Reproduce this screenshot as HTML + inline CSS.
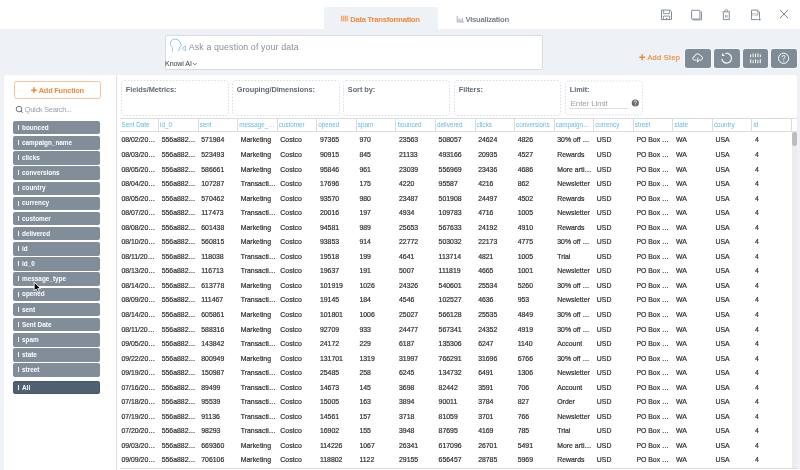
<!DOCTYPE html><html><head><meta charset="utf-8"><style>
*{box-sizing:border-box;margin:0;padding:0}
html,body{width:800px;height:470px;overflow:hidden;background:#fff;font-family:"Liberation Sans",sans-serif}
#root{position:absolute;left:0;top:0;width:800px;height:470px;will-change:transform;overflow:hidden}
.abs{position:absolute}
.t{position:absolute;white-space:nowrap;line-height:1}
.gray{position:absolute;left:0;top:29px;width:800px;height:441px;background:#eef1f5}
.tab{position:absolute;left:324px;top:7px;width:113.8px;height:22px;background:#eef1f5;border-radius:3px 3px 0 0}
.ai{position:absolute;left:165px;top:35px;width:377.5px;height:34.8px;background:#fff;border:1px solid #d9dde2;border-radius:2px}
.btn{position:absolute;top:48.7px;width:25.8px;height:19.7px;background:#7f8c98;border-radius:2.5px;box-shadow:0 0 0 1px #f6f8fa}
.btn svg{position:absolute;left:0;top:0}
.panel{position:absolute;left:4px;top:75px;width:793px;height:420px;background:#fff;border-radius:3px}
.div{position:absolute;left:116px;top:75px;width:1px;height:400px;background:#e0e0e0}
.addf{position:absolute;left:13.5px;top:81px;width:87.5px;height:17.6px;border:1px solid #f6c39a;border-radius:2.5px}
.pill{position:absolute;left:13px;width:87.4px;height:13.5px;background:#818e9a;border-radius:2px}
.pill span{position:absolute;left:9px;top:4.3px;font-size:6.4px;font-weight:bold;color:#fff;white-space:nowrap;line-height:1}
.pill i{position:absolute;left:5.1px;top:4.1px;width:1.15px;height:5.1px;background:repeating-linear-gradient(#fff 0 1.3px,rgba(255,255,255,.55) 1.3px 1.7px)}
.hc{position:absolute;top:118px;height:13.5px;width:1px;background:#dcdcdc}
.ht{position:absolute;font-size:6.3px;color:#62b9e6;white-space:nowrap;line-height:1}
.d{position:absolute;font-size:6.9px;color:#2e2e2e;white-space:nowrap;line-height:1;-webkit-text-stroke:0.2px #2e2e2e}
.ic{position:absolute}
</style></head><body><div id="root">
<div class="gray"></div>
<div class="tab"></div>

<svg class="ic" style="left:340px;top:15px" width="9" height="7"><rect x="1" y="0.8" width="7.2" height="5.6" fill="#f8d5b8"/><g fill="#f2a468"><rect x="1" y="0.8" width="1" height="5.6"/><rect x="2.9" y="0.8" width="1" height="5.6"/><rect x="4.8" y="0.8" width="1" height="5.6"/><rect x="6.7" y="0.8" width="1" height="5.6"/></g></svg>
<div class="t" style="left:350.20px;top:16.00px;font-size:7.7px;color:#ef8a3d;font-weight:bold;letter-spacing:-0.28px;">Data Transformation</div>
<svg class="ic" style="left:456px;top:15px" width="9" height="8"><path d="M1.2 0.8V7H8" fill="none" stroke="#a3a7ad" stroke-width="0.9"/><g fill="#a3a7ad"><rect x="2.6" y="3.5" width="1" height="3"/><rect x="4.2" y="4.6" width="1" height="1.9"/><rect x="5.8" y="3" width="1" height="3.5"/></g></svg>
<div class="t" style="left:465.50px;top:16.00px;font-size:7.7px;color:#7c8086;font-weight:bold;letter-spacing:-0.27px;">Visualization</div>
<svg class="ic" style="left:660px;top:9px" width="13" height="12"><path d="M1.5 1.1H10.1L11.5 2.5V10.6H1.5Z" fill="none" stroke="#75808b" stroke-width="0.9"/><path d="M3.6 1.2V4.7H9.4V1.2" fill="none" stroke="#75808b" stroke-width="0.8"/><path d="M3.4 10.5V7.1H9.6V10.5" fill="none" stroke="#75808b" stroke-width="0.8"/><rect x="5.9" y="8.9" width="1.2" height="1.5" fill="#75808b"/></svg>
<svg class="ic" style="left:690px;top:9px" width="13" height="12"><path d="M3.2 10.3V10.9H11.5V2.9H10.6" fill="none" stroke="#75808b" stroke-width="0.85"/><rect x="1.6" y="1.3" width="8.3" height="8.8" rx="0.5" fill="none" stroke="#75808b" stroke-width="0.9"/></svg>
<svg class="ic" style="left:721px;top:8px" width="11" height="13"><path d="M1.3 3.8H9.1" stroke="#75808b" stroke-width="0.9"/><path d="M3.9 3.6V2.6Q3.9 1.8 4.7 1.8H5.9Q6.7 1.8 6.7 2.6V3.6" fill="none" stroke="#75808b" stroke-width="0.8"/><path d="M2.4 4.3V11.6H8.3V4.3" fill="none" stroke="#75808b" stroke-width="0.9"/><path d="M4.6 7.1V9.6M6.1 7.1V9.6" stroke="#75808b" stroke-width="0.8"/></svg>
<svg class="ic" style="left:750px;top:9px" width="13" height="13"><path d="M7.9 10.6H1.5V1.1H7.4L9.5 3.2V8.2" fill="none" stroke="#75808b" stroke-width="0.9"/><path d="M7.4 1.1V3.2H9.5" fill="none" stroke="#75808b" stroke-width="0.6"/><text x="2.2" y="6.9" font-size="3.3" font-family="Liberation Sans" font-weight="bold" fill="#a9b0b8">PDF</text><path d="M9.6 8.4V10.4" stroke="#75808b" stroke-width="0.9"/><path d="M8.1 9.9H11.1L9.6 11.7Z" fill="#75808b"/></svg>
<svg class="ic" style="left:779px;top:9px" width="10" height="10"><path d="M1 1L9 9M9 1L1 9" stroke="#75808b" stroke-width="0.95"/></svg>
<div class="ai"></div>
<svg class="ic" style="left:166px;top:36px" width="24" height="20"><path d="M6.4 15.7V11.1C5 10 4.2 8.8 4.3 7.4C4.5 4.6 6.6 3 9 3C11.9 3 14.3 5.2 14.8 8.3L15.6 9.7L14 10.6L13.4 11.9L14 12.8L13.6 13.6L11.5 14.9" fill="none" stroke="#8fc5de" stroke-width="1"/><path d="M19.6 10L16.2 12.4L19.6 14.9Z" fill="none" stroke="#8fc5de" stroke-width="0.9"/></svg>
<div class="t" style="left:188.80px;top:43.00px;font-size:8.87px;color:#8c8f93;letter-spacing:0.1px;">Ask a question of your data</div>
<div class="t" style="left:165.00px;top:61.00px;font-size:7.1px;color:#3a3a3a;letter-spacing:-0.1px;">Knowi AI</div>
<svg class="ic" style="left:192px;top:62px" width="6" height="4"><path d="M0.8 0.9L2.8 2.9L4.8 0.9" fill="none" stroke="#555" stroke-width="0.8"/></svg>
<svg class="ic" style="left:639px;top:54px" width="7" height="7"><path d="M3.2 0.3V6.3M0.3 3.3H6.1" stroke="#ef8a3d" stroke-width="1.5"/></svg>
<div class="t" style="left:647.40px;top:54.00px;font-size:7.4px;color:#ef8a3d;letter-spacing:0.3px;-webkit-text-stroke:0.15px #ef8a3d;">Add Step</div>
<div class="btn" style="left:685.1px"><svg width="26" height="20"><path d="M11.3 11.1H9.6A1.8 1.8 0 0 1 9.7 7.5A2.9 2.9 0 0 1 15.3 6.7A2.3 2.3 0 0 1 16.1 11.1H14.2" fill="none" stroke="#fff" stroke-width="1"/><path d="M12.8 8.6V12.2" stroke="#fff" stroke-width="1"/><path d="M11.3 11.6L12.8 13.5L14.3 11.6Z" fill="#fff"/></svg></div>
<div class="btn" style="left:713.8px"><svg width="26" height="20"><path d="M7.8 9.9A4.9 4.9 0 1 0 11.3 4.5" fill="none" stroke="#fff" stroke-width="1.15"/><path d="M8 4.1L8 6.9L10.9 6.9Z" fill="#fff"/></svg></div>
<div class="btn" style="left:742.5px"><svg width="26" height="20"><g fill="#fff"><rect x="7.2" y="5.4" width="1" height="2.8"/><rect x="9.6" y="4.4" width="1" height="3.8"/><rect x="12" y="4.6" width="1" height="3.6"/><rect x="14.4" y="4.3" width="1" height="3.9"/><rect x="16.8" y="5.4" width="1" height="2.8"/><rect x="7.2" y="10.2" width="1" height="4"/><rect x="9.6" y="11.2" width="1" height="3"/><rect x="12" y="10.2" width="1" height="4"/><rect x="14.4" y="11" width="1" height="3.2"/><rect x="16.8" y="10.2" width="1" height="4"/></g></svg></div>
<div class="btn" style="left:770.9px"><svg width="26" height="20"><circle cx="12.6" cy="9.3" r="5.1" fill="none" stroke="#fff" stroke-width="1"/><path d="M11.1 8.0Q11.1 6.4 12.6 6.4Q14.1 6.4 14.1 7.8Q14.1 8.7 13.1 9.2Q12.6 9.5 12.6 10.6" fill="none" stroke="#fff" stroke-width="0.9"/><circle cx="12.6" cy="12" r="0.6" fill="#fff"/></svg></div>
<div class="panel"></div>
<div class="div"></div>
<div class="addf"></div>
<svg class="ic" style="left:31px;top:86.5px" width="7" height="7"><path d="M3 0.3V6.1M0.2 3.2H5.8" stroke="#ef8a3d" stroke-width="1.5"/></svg>
<div class="t" style="left:38.70px;top:87.00px;font-size:7.4px;color:#ef8a3d;font-weight:bold;letter-spacing:-0.2px;">Add Function</div>
<svg class="ic" style="left:15px;top:105px" width="9" height="9"><circle cx="4" cy="4.1" r="2.8" fill="none" stroke="#6a6a6a" stroke-width="0.95"/><path d="M6 6.1L7.8 7.7" stroke="#6a6a6a" stroke-width="1"/></svg>
<div class="t" style="left:24.60px;top:106.00px;font-size:7.7px;color:#98a2ad;letter-spacing:-0.39px;">Quick Search...</div>
<div class="pill" style="top:120.90px"></div>
<div class="abs" style="left:18px;top:125px;width:1.2px;height:5px;background:#f4f5f7"></div>
<div class="t" style="left:22.00px;top:125.00px;font-size:6.4px;color:#fff;font-weight:bold;">bounced</div>
<div class="pill" style="top:136.05px"></div>
<div class="abs" style="left:18px;top:140px;width:1.2px;height:5px;background:#f4f5f7"></div>
<div class="t" style="left:22.00px;top:140.00px;font-size:6.4px;color:#fff;font-weight:bold;">campaign_name</div>
<div class="pill" style="top:151.20px"></div>
<div class="abs" style="left:18px;top:155px;width:1.2px;height:5px;background:#f4f5f7"></div>
<div class="t" style="left:22.00px;top:155.00px;font-size:6.4px;color:#fff;font-weight:bold;">clicks</div>
<div class="pill" style="top:166.35px"></div>
<div class="abs" style="left:18px;top:170px;width:1.2px;height:5px;background:#f4f5f7"></div>
<div class="t" style="left:22.00px;top:170.00px;font-size:6.4px;color:#fff;font-weight:bold;">conversions</div>
<div class="pill" style="top:181.50px"></div>
<div class="abs" style="left:18px;top:186px;width:1.2px;height:5px;background:#f4f5f7"></div>
<div class="t" style="left:22.00px;top:185.00px;font-size:6.4px;color:#fff;font-weight:bold;">country</div>
<div class="pill" style="top:196.65px"></div>
<div class="abs" style="left:18px;top:201px;width:1.2px;height:5px;background:#f4f5f7"></div>
<div class="t" style="left:22.00px;top:200.00px;font-size:6.4px;color:#fff;font-weight:bold;">currency</div>
<div class="pill" style="top:211.80px"></div>
<div class="abs" style="left:18px;top:216px;width:1.2px;height:5px;background:#f4f5f7"></div>
<div class="t" style="left:22.00px;top:216.00px;font-size:6.4px;color:#fff;font-weight:bold;">customer</div>
<div class="pill" style="top:226.95px"></div>
<div class="abs" style="left:18px;top:231px;width:1.2px;height:5px;background:#f4f5f7"></div>
<div class="t" style="left:22.00px;top:231.00px;font-size:6.4px;color:#fff;font-weight:bold;">delivered</div>
<div class="pill" style="top:242.10px"></div>
<div class="abs" style="left:18px;top:246px;width:1.2px;height:5px;background:#f4f5f7"></div>
<div class="t" style="left:22.00px;top:246.00px;font-size:6.4px;color:#fff;font-weight:bold;">id</div>
<div class="pill" style="top:257.25px"></div>
<div class="abs" style="left:18px;top:261px;width:1.2px;height:5px;background:#f4f5f7"></div>
<div class="t" style="left:22.00px;top:261.00px;font-size:6.4px;color:#fff;font-weight:bold;">id_0</div>
<div class="pill" style="top:272.40px"></div>
<div class="abs" style="left:18px;top:276px;width:1.2px;height:5px;background:#f4f5f7"></div>
<div class="t" style="left:22.00px;top:276.00px;font-size:6.4px;color:#fff;font-weight:bold;">message_type</div>
<div class="pill" style="top:287.55px"></div>
<div class="abs" style="left:18px;top:292px;width:1.2px;height:5px;background:#f4f5f7"></div>
<div class="t" style="left:22.00px;top:291.00px;font-size:6.4px;color:#fff;font-weight:bold;">opened</div>
<div class="pill" style="top:302.70px"></div>
<div class="abs" style="left:18px;top:307px;width:1.2px;height:5px;background:#f4f5f7"></div>
<div class="t" style="left:22.00px;top:307.00px;font-size:6.4px;color:#fff;font-weight:bold;">sent</div>
<div class="pill" style="top:317.85px"></div>
<div class="abs" style="left:18px;top:322px;width:1.2px;height:5px;background:#f4f5f7"></div>
<div class="t" style="left:22.00px;top:322.00px;font-size:6.4px;color:#fff;font-weight:bold;">Sent Date</div>
<div class="pill" style="top:333.00px"></div>
<div class="abs" style="left:18px;top:337px;width:1.2px;height:5px;background:#f4f5f7"></div>
<div class="t" style="left:22.00px;top:337.00px;font-size:6.4px;color:#fff;font-weight:bold;">spam</div>
<div class="pill" style="top:348.15px"></div>
<div class="abs" style="left:18px;top:352px;width:1.2px;height:5px;background:#f4f5f7"></div>
<div class="t" style="left:22.00px;top:352.00px;font-size:6.4px;color:#fff;font-weight:bold;">state</div>
<div class="pill" style="top:363.30px"></div>
<div class="abs" style="left:18px;top:367px;width:1.2px;height:5px;background:#f4f5f7"></div>
<div class="t" style="left:22.00px;top:367.00px;font-size:6.4px;color:#fff;font-weight:bold;">street</div>
<div class="pill" style="top:380.8px;background:#506073;border:0.8px solid #46566b"></div>
<div class="abs" style="left:18px;top:385px;width:1.2px;height:5px;background:#f4f5f7"></div>
<div class="t" style="left:22.00px;top:385.00px;font-size:6.4px;color:#fff;font-weight:bold;">All</div>
<svg class="abs" style="left:0;top:0" width="800" height="130"><rect x="121.5" y="80.5" width="107" height="35" rx="3" fill="none" stroke="#d9dde1" stroke-width="1" stroke-dasharray="1.5 1.7"/><rect x="232.5" y="80.5" width="107" height="35" rx="3" fill="none" stroke="#d9dde1" stroke-width="1" stroke-dasharray="1.5 1.7"/><rect x="343.5" y="80.5" width="106" height="35" rx="3" fill="none" stroke="#d9dde1" stroke-width="1" stroke-dasharray="1.5 1.7"/><rect x="454.5" y="80.5" width="106" height="35" rx="3" fill="none" stroke="#d9dde1" stroke-width="1" stroke-dasharray="1.5 1.7"/><rect x="565.5" y="81" width="77" height="34" rx="3" fill="none" stroke="#d9dde1" stroke-width="1" stroke-dasharray="1.5 1.7"/></svg>
<div class="t" style="left:125.80px;top:86.00px;font-size:7.4px;color:#5f6b7a;font-weight:bold;letter-spacing:-0.08px;">Fields/Metrics:</div>
<div class="t" style="left:236.80px;top:86.00px;font-size:7.4px;color:#5f6b7a;font-weight:bold;letter-spacing:-0.08px;">Grouping/Dimensions:</div>
<div class="t" style="left:347.80px;top:86.00px;font-size:7.4px;color:#5f6b7a;font-weight:bold;letter-spacing:-0.08px;">Sort by:</div>
<div class="t" style="left:458.80px;top:86.00px;font-size:7.4px;color:#5f6b7a;font-weight:bold;letter-spacing:-0.08px;">Filters:</div>
<div class="t" style="left:569.80px;top:86.00px;font-size:7.4px;color:#5f6b7a;font-weight:bold;letter-spacing:-0.08px;">Limit:</div>
<div class="t" style="left:570.60px;top:100.00px;font-size:8.0px;color:#a2a2a2;letter-spacing:-0.11px;">Enter Limit</div>
<div class="abs" style="left:569px;top:108.4px;width:59px;height:1px;background:#dde1e6"></div>
<svg class="ic" style="left:631px;top:99px" width="9" height="9"><circle cx="4.3" cy="4" r="3.6" fill="#6a6a6a"/><path d="M3.1 3.1Q3.1 1.8 4.3 1.8Q5.5 1.8 5.5 2.9Q5.5 3.6 4.8 3.9Q4.3 4.2 4.3 5" fill="none" stroke="#e6e6e6" stroke-width="1"/><circle cx="4.3" cy="6.1" r="0.55" fill="#e6e6e6"/></svg>
<div class="abs" style="left:120px;top:118px;width:677px;height:1px;background:#dcdcdc"></div>
<div class="abs" style="left:120px;top:131px;width:677px;height:1px;background:#dcdcdc"></div>
<div class="ht" style="left:121.60px;top:122px">Sent Date</div>
<div class="hc" style="left:158px"></div>
<div class="ht" style="left:160.06px;top:122px">id_0</div>
<div class="hc" style="left:198px"></div>
<div class="ht" style="left:199.62px;top:122px">sent</div>
<div class="hc" style="left:237px"></div>
<div class="ht" style="left:239.18px;top:122px">message_…</div>
<div class="hc" style="left:277px"></div>
<div class="ht" style="left:278.74px;top:122px">customer</div>
<div class="hc" style="left:316px"></div>
<div class="ht" style="left:318.30px;top:122px">opened</div>
<div class="hc" style="left:356px"></div>
<div class="ht" style="left:357.86px;top:122px">spam</div>
<div class="hc" style="left:395px"></div>
<div class="ht" style="left:397.42px;top:122px">bounced</div>
<div class="hc" style="left:435px"></div>
<div class="ht" style="left:436.98px;top:122px">delivered</div>
<div class="hc" style="left:475px"></div>
<div class="ht" style="left:476.54px;top:122px">clicks</div>
<div class="hc" style="left:514px"></div>
<div class="ht" style="left:516.10px;top:122px">conversions</div>
<div class="hc" style="left:554px"></div>
<div class="ht" style="left:555.66px;top:122px">campaign…</div>
<div class="hc" style="left:593px"></div>
<div class="ht" style="left:595.22px;top:122px">currency</div>
<div class="hc" style="left:633px"></div>
<div class="ht" style="left:634.78px;top:122px">street</div>
<div class="hc" style="left:672px"></div>
<div class="ht" style="left:674.34px;top:122px">state</div>
<div class="hc" style="left:712px"></div>
<div class="ht" style="left:713.90px;top:122px">country</div>
<div class="hc" style="left:751px"></div>
<div class="ht" style="left:753.46px;top:122px">id</div>
<div class="hc" style="left:791px"></div>
<div class="d" style="left:121.40px;top:137px">08/02/20…</div>
<div class="d" style="left:161.66px;top:137px">556a882…</div>
<div class="d" style="left:201.22px;top:137px">571984</div>
<div class="d" style="left:240.78px;top:137px">Marketing</div>
<div class="d" style="left:280.34px;top:137px">Costco</div>
<div class="d" style="left:319.90px;top:137px">97365</div>
<div class="d" style="left:359.46px;top:137px">970</div>
<div class="d" style="left:399.02px;top:137px">23563</div>
<div class="d" style="left:438.58px;top:137px">508057</div>
<div class="d" style="left:478.14px;top:137px">24624</div>
<div class="d" style="left:517.70px;top:137px">4826</div>
<div class="d" style="left:557.26px;top:137px">30% off …</div>
<div class="d" style="left:596.82px;top:137px">USD</div>
<div class="d" style="left:636.38px;top:137px">PO Box …</div>
<div class="d" style="left:675.94px;top:137px">WA</div>
<div class="d" style="left:715.50px;top:137px">USA</div>
<div class="d" style="left:755.06px;top:137px">4</div>
<div class="d" style="left:121.40px;top:152px">08/03/20…</div>
<div class="d" style="left:161.66px;top:152px">556a882…</div>
<div class="d" style="left:201.22px;top:152px">523493</div>
<div class="d" style="left:240.78px;top:152px">Marketing</div>
<div class="d" style="left:280.34px;top:152px">Costco</div>
<div class="d" style="left:319.90px;top:152px">90915</div>
<div class="d" style="left:359.46px;top:152px">845</div>
<div class="d" style="left:399.02px;top:152px">21133</div>
<div class="d" style="left:438.58px;top:152px">493166</div>
<div class="d" style="left:478.14px;top:152px">20935</div>
<div class="d" style="left:517.70px;top:152px">4527</div>
<div class="d" style="left:557.26px;top:152px">Rewards</div>
<div class="d" style="left:596.82px;top:152px">USD</div>
<div class="d" style="left:636.38px;top:152px">PO Box …</div>
<div class="d" style="left:675.94px;top:152px">WA</div>
<div class="d" style="left:715.50px;top:152px">USA</div>
<div class="d" style="left:755.06px;top:152px">4</div>
<div class="d" style="left:121.40px;top:167px">08/05/20…</div>
<div class="d" style="left:161.66px;top:167px">556a882…</div>
<div class="d" style="left:201.22px;top:167px">586661</div>
<div class="d" style="left:240.78px;top:167px">Marketing</div>
<div class="d" style="left:280.34px;top:167px">Costco</div>
<div class="d" style="left:319.90px;top:167px">95846</div>
<div class="d" style="left:359.46px;top:167px">961</div>
<div class="d" style="left:399.02px;top:167px">23039</div>
<div class="d" style="left:438.58px;top:167px">556969</div>
<div class="d" style="left:478.14px;top:167px">23436</div>
<div class="d" style="left:517.70px;top:167px">4686</div>
<div class="d" style="left:557.26px;top:167px">More arti…</div>
<div class="d" style="left:596.82px;top:167px">USD</div>
<div class="d" style="left:636.38px;top:167px">PO Box …</div>
<div class="d" style="left:675.94px;top:167px">WA</div>
<div class="d" style="left:715.50px;top:167px">USA</div>
<div class="d" style="left:755.06px;top:167px">4</div>
<div class="d" style="left:121.40px;top:181px">08/04/20…</div>
<div class="d" style="left:161.66px;top:181px">556a882…</div>
<div class="d" style="left:201.22px;top:181px">107287</div>
<div class="d" style="left:240.78px;top:181px">Transacti…</div>
<div class="d" style="left:280.34px;top:181px">Costco</div>
<div class="d" style="left:319.90px;top:181px">17696</div>
<div class="d" style="left:359.46px;top:181px">175</div>
<div class="d" style="left:399.02px;top:181px">4220</div>
<div class="d" style="left:438.58px;top:181px">95587</div>
<div class="d" style="left:478.14px;top:181px">4216</div>
<div class="d" style="left:517.70px;top:181px">862</div>
<div class="d" style="left:557.26px;top:181px">Newsletter</div>
<div class="d" style="left:596.82px;top:181px">USD</div>
<div class="d" style="left:636.38px;top:181px">PO Box …</div>
<div class="d" style="left:675.94px;top:181px">WA</div>
<div class="d" style="left:715.50px;top:181px">USA</div>
<div class="d" style="left:755.06px;top:181px">4</div>
<div class="d" style="left:121.40px;top:196px">08/05/20…</div>
<div class="d" style="left:161.66px;top:196px">556a882…</div>
<div class="d" style="left:201.22px;top:196px">570462</div>
<div class="d" style="left:240.78px;top:196px">Marketing</div>
<div class="d" style="left:280.34px;top:196px">Costco</div>
<div class="d" style="left:319.90px;top:196px">93570</div>
<div class="d" style="left:359.46px;top:196px">980</div>
<div class="d" style="left:399.02px;top:196px">23487</div>
<div class="d" style="left:438.58px;top:196px">501908</div>
<div class="d" style="left:478.14px;top:196px">24497</div>
<div class="d" style="left:517.70px;top:196px">4502</div>
<div class="d" style="left:557.26px;top:196px">Rewards</div>
<div class="d" style="left:596.82px;top:196px">USD</div>
<div class="d" style="left:636.38px;top:196px">PO Box …</div>
<div class="d" style="left:675.94px;top:196px">WA</div>
<div class="d" style="left:715.50px;top:196px">USA</div>
<div class="d" style="left:755.06px;top:196px">4</div>
<div class="d" style="left:121.40px;top:210px">08/07/20…</div>
<div class="d" style="left:161.66px;top:210px">556a882…</div>
<div class="d" style="left:201.22px;top:210px">117473</div>
<div class="d" style="left:240.78px;top:210px">Transacti…</div>
<div class="d" style="left:280.34px;top:210px">Costco</div>
<div class="d" style="left:319.90px;top:210px">20016</div>
<div class="d" style="left:359.46px;top:210px">197</div>
<div class="d" style="left:399.02px;top:210px">4934</div>
<div class="d" style="left:438.58px;top:210px">109783</div>
<div class="d" style="left:478.14px;top:210px">4716</div>
<div class="d" style="left:517.70px;top:210px">1005</div>
<div class="d" style="left:557.26px;top:210px">Newsletter</div>
<div class="d" style="left:596.82px;top:210px">USD</div>
<div class="d" style="left:636.38px;top:210px">PO Box …</div>
<div class="d" style="left:675.94px;top:210px">WA</div>
<div class="d" style="left:715.50px;top:210px">USA</div>
<div class="d" style="left:755.06px;top:210px">4</div>
<div class="d" style="left:121.40px;top:225px">08/08/20…</div>
<div class="d" style="left:161.66px;top:225px">556a882…</div>
<div class="d" style="left:201.22px;top:225px">601438</div>
<div class="d" style="left:240.78px;top:225px">Marketing</div>
<div class="d" style="left:280.34px;top:225px">Costco</div>
<div class="d" style="left:319.90px;top:225px">94581</div>
<div class="d" style="left:359.46px;top:225px">989</div>
<div class="d" style="left:399.02px;top:225px">25653</div>
<div class="d" style="left:438.58px;top:225px">567633</div>
<div class="d" style="left:478.14px;top:225px">24192</div>
<div class="d" style="left:517.70px;top:225px">4910</div>
<div class="d" style="left:557.26px;top:225px">Rewards</div>
<div class="d" style="left:596.82px;top:225px">USD</div>
<div class="d" style="left:636.38px;top:225px">PO Box …</div>
<div class="d" style="left:675.94px;top:225px">WA</div>
<div class="d" style="left:715.50px;top:225px">USA</div>
<div class="d" style="left:755.06px;top:225px">4</div>
<div class="d" style="left:121.40px;top:239px">08/10/20…</div>
<div class="d" style="left:161.66px;top:239px">556a882…</div>
<div class="d" style="left:201.22px;top:239px">560815</div>
<div class="d" style="left:240.78px;top:239px">Marketing</div>
<div class="d" style="left:280.34px;top:239px">Costco</div>
<div class="d" style="left:319.90px;top:239px">93853</div>
<div class="d" style="left:359.46px;top:239px">914</div>
<div class="d" style="left:399.02px;top:239px">22772</div>
<div class="d" style="left:438.58px;top:239px">503032</div>
<div class="d" style="left:478.14px;top:239px">22173</div>
<div class="d" style="left:517.70px;top:239px">4775</div>
<div class="d" style="left:557.26px;top:239px">30% off …</div>
<div class="d" style="left:596.82px;top:239px">USD</div>
<div class="d" style="left:636.38px;top:239px">PO Box …</div>
<div class="d" style="left:675.94px;top:239px">WA</div>
<div class="d" style="left:715.50px;top:239px">USA</div>
<div class="d" style="left:755.06px;top:239px">4</div>
<div class="d" style="left:121.40px;top:254px">08/11/20…</div>
<div class="d" style="left:161.66px;top:254px">556a882…</div>
<div class="d" style="left:201.22px;top:254px">118038</div>
<div class="d" style="left:240.78px;top:254px">Transacti…</div>
<div class="d" style="left:280.34px;top:254px">Costco</div>
<div class="d" style="left:319.90px;top:254px">19518</div>
<div class="d" style="left:359.46px;top:254px">199</div>
<div class="d" style="left:399.02px;top:254px">4641</div>
<div class="d" style="left:438.58px;top:254px">113714</div>
<div class="d" style="left:478.14px;top:254px">4821</div>
<div class="d" style="left:517.70px;top:254px">1005</div>
<div class="d" style="left:557.26px;top:254px">Trial</div>
<div class="d" style="left:596.82px;top:254px">USD</div>
<div class="d" style="left:636.38px;top:254px">PO Box …</div>
<div class="d" style="left:675.94px;top:254px">WA</div>
<div class="d" style="left:715.50px;top:254px">USA</div>
<div class="d" style="left:755.06px;top:254px">4</div>
<div class="d" style="left:121.40px;top:268px">08/13/20…</div>
<div class="d" style="left:161.66px;top:268px">556a882…</div>
<div class="d" style="left:201.22px;top:268px">116713</div>
<div class="d" style="left:240.78px;top:268px">Transacti…</div>
<div class="d" style="left:280.34px;top:268px">Costco</div>
<div class="d" style="left:319.90px;top:268px">19637</div>
<div class="d" style="left:359.46px;top:268px">191</div>
<div class="d" style="left:399.02px;top:268px">5007</div>
<div class="d" style="left:438.58px;top:268px">111819</div>
<div class="d" style="left:478.14px;top:268px">4665</div>
<div class="d" style="left:517.70px;top:268px">1001</div>
<div class="d" style="left:557.26px;top:268px">Newsletter</div>
<div class="d" style="left:596.82px;top:268px">USD</div>
<div class="d" style="left:636.38px;top:268px">PO Box …</div>
<div class="d" style="left:675.94px;top:268px">WA</div>
<div class="d" style="left:715.50px;top:268px">USA</div>
<div class="d" style="left:755.06px;top:268px">4</div>
<div class="d" style="left:121.40px;top:283px">08/14/20…</div>
<div class="d" style="left:161.66px;top:283px">556a882…</div>
<div class="d" style="left:201.22px;top:283px">613778</div>
<div class="d" style="left:240.78px;top:283px">Marketing</div>
<div class="d" style="left:280.34px;top:283px">Costco</div>
<div class="d" style="left:319.90px;top:283px">101919</div>
<div class="d" style="left:359.46px;top:283px">1026</div>
<div class="d" style="left:399.02px;top:283px">24326</div>
<div class="d" style="left:438.58px;top:283px">540601</div>
<div class="d" style="left:478.14px;top:283px">25534</div>
<div class="d" style="left:517.70px;top:283px">5260</div>
<div class="d" style="left:557.26px;top:283px">30% off …</div>
<div class="d" style="left:596.82px;top:283px">USD</div>
<div class="d" style="left:636.38px;top:283px">PO Box …</div>
<div class="d" style="left:675.94px;top:283px">WA</div>
<div class="d" style="left:715.50px;top:283px">USA</div>
<div class="d" style="left:755.06px;top:283px">4</div>
<div class="d" style="left:121.40px;top:297px">08/09/20…</div>
<div class="d" style="left:161.66px;top:297px">556a882…</div>
<div class="d" style="left:201.22px;top:297px">111467</div>
<div class="d" style="left:240.78px;top:297px">Transacti…</div>
<div class="d" style="left:280.34px;top:297px">Costco</div>
<div class="d" style="left:319.90px;top:297px">19145</div>
<div class="d" style="left:359.46px;top:297px">184</div>
<div class="d" style="left:399.02px;top:297px">4546</div>
<div class="d" style="left:438.58px;top:297px">102527</div>
<div class="d" style="left:478.14px;top:297px">4636</div>
<div class="d" style="left:517.70px;top:297px">953</div>
<div class="d" style="left:557.26px;top:297px">Newsletter</div>
<div class="d" style="left:596.82px;top:297px">USD</div>
<div class="d" style="left:636.38px;top:297px">PO Box …</div>
<div class="d" style="left:675.94px;top:297px">WA</div>
<div class="d" style="left:715.50px;top:297px">USA</div>
<div class="d" style="left:755.06px;top:297px">4</div>
<div class="d" style="left:121.40px;top:312px">08/14/20…</div>
<div class="d" style="left:161.66px;top:312px">556a882…</div>
<div class="d" style="left:201.22px;top:312px">605861</div>
<div class="d" style="left:240.78px;top:312px">Marketing</div>
<div class="d" style="left:280.34px;top:312px">Costco</div>
<div class="d" style="left:319.90px;top:312px">101801</div>
<div class="d" style="left:359.46px;top:312px">1006</div>
<div class="d" style="left:399.02px;top:312px">25027</div>
<div class="d" style="left:438.58px;top:312px">566128</div>
<div class="d" style="left:478.14px;top:312px">25535</div>
<div class="d" style="left:517.70px;top:312px">4849</div>
<div class="d" style="left:557.26px;top:312px">30% off …</div>
<div class="d" style="left:596.82px;top:312px">USD</div>
<div class="d" style="left:636.38px;top:312px">PO Box …</div>
<div class="d" style="left:675.94px;top:312px">WA</div>
<div class="d" style="left:715.50px;top:312px">USA</div>
<div class="d" style="left:755.06px;top:312px">4</div>
<div class="d" style="left:121.40px;top:327px">08/11/20…</div>
<div class="d" style="left:161.66px;top:327px">556a882…</div>
<div class="d" style="left:201.22px;top:327px">588316</div>
<div class="d" style="left:240.78px;top:327px">Marketing</div>
<div class="d" style="left:280.34px;top:327px">Costco</div>
<div class="d" style="left:319.90px;top:327px">92709</div>
<div class="d" style="left:359.46px;top:327px">933</div>
<div class="d" style="left:399.02px;top:327px">24477</div>
<div class="d" style="left:438.58px;top:327px">567341</div>
<div class="d" style="left:478.14px;top:327px">24352</div>
<div class="d" style="left:517.70px;top:327px">4919</div>
<div class="d" style="left:557.26px;top:327px">30% off …</div>
<div class="d" style="left:596.82px;top:327px">USD</div>
<div class="d" style="left:636.38px;top:327px">PO Box …</div>
<div class="d" style="left:675.94px;top:327px">WA</div>
<div class="d" style="left:715.50px;top:327px">USA</div>
<div class="d" style="left:755.06px;top:327px">4</div>
<div class="d" style="left:121.40px;top:341px">09/05/20…</div>
<div class="d" style="left:161.66px;top:341px">556a882…</div>
<div class="d" style="left:201.22px;top:341px">143842</div>
<div class="d" style="left:240.78px;top:341px">Transacti…</div>
<div class="d" style="left:280.34px;top:341px">Costco</div>
<div class="d" style="left:319.90px;top:341px">24172</div>
<div class="d" style="left:359.46px;top:341px">229</div>
<div class="d" style="left:399.02px;top:341px">6187</div>
<div class="d" style="left:438.58px;top:341px">135306</div>
<div class="d" style="left:478.14px;top:341px">6247</div>
<div class="d" style="left:517.70px;top:341px">1140</div>
<div class="d" style="left:557.26px;top:341px">Account</div>
<div class="d" style="left:596.82px;top:341px">USD</div>
<div class="d" style="left:636.38px;top:341px">PO Box …</div>
<div class="d" style="left:675.94px;top:341px">WA</div>
<div class="d" style="left:715.50px;top:341px">USA</div>
<div class="d" style="left:755.06px;top:341px">4</div>
<div class="d" style="left:121.40px;top:356px">09/22/20…</div>
<div class="d" style="left:161.66px;top:356px">556a882…</div>
<div class="d" style="left:201.22px;top:356px">800949</div>
<div class="d" style="left:240.78px;top:356px">Marketing</div>
<div class="d" style="left:280.34px;top:356px">Costco</div>
<div class="d" style="left:319.90px;top:356px">131701</div>
<div class="d" style="left:359.46px;top:356px">1319</div>
<div class="d" style="left:399.02px;top:356px">31997</div>
<div class="d" style="left:438.58px;top:356px">766291</div>
<div class="d" style="left:478.14px;top:356px">31696</div>
<div class="d" style="left:517.70px;top:356px">6766</div>
<div class="d" style="left:557.26px;top:356px">30% off …</div>
<div class="d" style="left:596.82px;top:356px">USD</div>
<div class="d" style="left:636.38px;top:356px">PO Box …</div>
<div class="d" style="left:675.94px;top:356px">WA</div>
<div class="d" style="left:715.50px;top:356px">USA</div>
<div class="d" style="left:755.06px;top:356px">4</div>
<div class="d" style="left:121.40px;top:370px">09/19/20…</div>
<div class="d" style="left:161.66px;top:370px">556a882…</div>
<div class="d" style="left:201.22px;top:370px">150987</div>
<div class="d" style="left:240.78px;top:370px">Transacti…</div>
<div class="d" style="left:280.34px;top:370px">Costco</div>
<div class="d" style="left:319.90px;top:370px">25485</div>
<div class="d" style="left:359.46px;top:370px">258</div>
<div class="d" style="left:399.02px;top:370px">6245</div>
<div class="d" style="left:438.58px;top:370px">134732</div>
<div class="d" style="left:478.14px;top:370px">6491</div>
<div class="d" style="left:517.70px;top:370px">1306</div>
<div class="d" style="left:557.26px;top:370px">Newsletter</div>
<div class="d" style="left:596.82px;top:370px">USD</div>
<div class="d" style="left:636.38px;top:370px">PO Box …</div>
<div class="d" style="left:675.94px;top:370px">WA</div>
<div class="d" style="left:715.50px;top:370px">USA</div>
<div class="d" style="left:755.06px;top:370px">4</div>
<div class="d" style="left:121.40px;top:385px">07/16/20…</div>
<div class="d" style="left:161.66px;top:385px">556a882…</div>
<div class="d" style="left:201.22px;top:385px">89499</div>
<div class="d" style="left:240.78px;top:385px">Transacti…</div>
<div class="d" style="left:280.34px;top:385px">Costco</div>
<div class="d" style="left:319.90px;top:385px">14673</div>
<div class="d" style="left:359.46px;top:385px">145</div>
<div class="d" style="left:399.02px;top:385px">3698</div>
<div class="d" style="left:438.58px;top:385px">82442</div>
<div class="d" style="left:478.14px;top:385px">3591</div>
<div class="d" style="left:517.70px;top:385px">706</div>
<div class="d" style="left:557.26px;top:385px">Account</div>
<div class="d" style="left:596.82px;top:385px">USD</div>
<div class="d" style="left:636.38px;top:385px">PO Box …</div>
<div class="d" style="left:675.94px;top:385px">WA</div>
<div class="d" style="left:715.50px;top:385px">USA</div>
<div class="d" style="left:755.06px;top:385px">4</div>
<div class="d" style="left:121.40px;top:399px">07/18/20…</div>
<div class="d" style="left:161.66px;top:399px">556a882…</div>
<div class="d" style="left:201.22px;top:399px">95539</div>
<div class="d" style="left:240.78px;top:399px">Transacti…</div>
<div class="d" style="left:280.34px;top:399px">Costco</div>
<div class="d" style="left:319.90px;top:399px">15005</div>
<div class="d" style="left:359.46px;top:399px">163</div>
<div class="d" style="left:399.02px;top:399px">3894</div>
<div class="d" style="left:438.58px;top:399px">90011</div>
<div class="d" style="left:478.14px;top:399px">3784</div>
<div class="d" style="left:517.70px;top:399px">827</div>
<div class="d" style="left:557.26px;top:399px">Order</div>
<div class="d" style="left:596.82px;top:399px">USD</div>
<div class="d" style="left:636.38px;top:399px">PO Box …</div>
<div class="d" style="left:675.94px;top:399px">WA</div>
<div class="d" style="left:715.50px;top:399px">USA</div>
<div class="d" style="left:755.06px;top:399px">4</div>
<div class="d" style="left:121.40px;top:414px">07/19/20…</div>
<div class="d" style="left:161.66px;top:414px">556a882…</div>
<div class="d" style="left:201.22px;top:414px">91136</div>
<div class="d" style="left:240.78px;top:414px">Transacti…</div>
<div class="d" style="left:280.34px;top:414px">Costco</div>
<div class="d" style="left:319.90px;top:414px">14561</div>
<div class="d" style="left:359.46px;top:414px">157</div>
<div class="d" style="left:399.02px;top:414px">3718</div>
<div class="d" style="left:438.58px;top:414px">81059</div>
<div class="d" style="left:478.14px;top:414px">3701</div>
<div class="d" style="left:517.70px;top:414px">766</div>
<div class="d" style="left:557.26px;top:414px">Newsletter</div>
<div class="d" style="left:596.82px;top:414px">USD</div>
<div class="d" style="left:636.38px;top:414px">PO Box …</div>
<div class="d" style="left:675.94px;top:414px">WA</div>
<div class="d" style="left:715.50px;top:414px">USA</div>
<div class="d" style="left:755.06px;top:414px">4</div>
<div class="d" style="left:121.40px;top:428px">07/20/20…</div>
<div class="d" style="left:161.66px;top:428px">556a882…</div>
<div class="d" style="left:201.22px;top:428px">98293</div>
<div class="d" style="left:240.78px;top:428px">Transacti…</div>
<div class="d" style="left:280.34px;top:428px">Costco</div>
<div class="d" style="left:319.90px;top:428px">16902</div>
<div class="d" style="left:359.46px;top:428px">155</div>
<div class="d" style="left:399.02px;top:428px">3948</div>
<div class="d" style="left:438.58px;top:428px">87695</div>
<div class="d" style="left:478.14px;top:428px">4169</div>
<div class="d" style="left:517.70px;top:428px">785</div>
<div class="d" style="left:557.26px;top:428px">Trial</div>
<div class="d" style="left:596.82px;top:428px">USD</div>
<div class="d" style="left:636.38px;top:428px">PO Box …</div>
<div class="d" style="left:675.94px;top:428px">WA</div>
<div class="d" style="left:715.50px;top:428px">USA</div>
<div class="d" style="left:755.06px;top:428px">4</div>
<div class="d" style="left:121.40px;top:443px">09/03/20…</div>
<div class="d" style="left:161.66px;top:443px">556a882…</div>
<div class="d" style="left:201.22px;top:443px">669360</div>
<div class="d" style="left:240.78px;top:443px">Marketing</div>
<div class="d" style="left:280.34px;top:443px">Costco</div>
<div class="d" style="left:319.90px;top:443px">114226</div>
<div class="d" style="left:359.46px;top:443px">1067</div>
<div class="d" style="left:399.02px;top:443px">26341</div>
<div class="d" style="left:438.58px;top:443px">617096</div>
<div class="d" style="left:478.14px;top:443px">26701</div>
<div class="d" style="left:517.70px;top:443px">5491</div>
<div class="d" style="left:557.26px;top:443px">More arti…</div>
<div class="d" style="left:596.82px;top:443px">USD</div>
<div class="d" style="left:636.38px;top:443px">PO Box …</div>
<div class="d" style="left:675.94px;top:443px">WA</div>
<div class="d" style="left:715.50px;top:443px">USA</div>
<div class="d" style="left:755.06px;top:443px">4</div>
<div class="d" style="left:121.40px;top:457px">09/09/20…</div>
<div class="d" style="left:161.66px;top:457px">556a882…</div>
<div class="d" style="left:201.22px;top:457px">706106</div>
<div class="d" style="left:240.78px;top:457px">Marketing</div>
<div class="d" style="left:280.34px;top:457px">Costco</div>
<div class="d" style="left:319.90px;top:457px">118802</div>
<div class="d" style="left:359.46px;top:457px">1122</div>
<div class="d" style="left:399.02px;top:457px">29155</div>
<div class="d" style="left:438.58px;top:457px">656457</div>
<div class="d" style="left:478.14px;top:457px">28785</div>
<div class="d" style="left:517.70px;top:457px">5969</div>
<div class="d" style="left:557.26px;top:457px">Rewards</div>
<div class="d" style="left:596.82px;top:457px">USD</div>
<div class="d" style="left:636.38px;top:457px">PO Box …</div>
<div class="d" style="left:675.94px;top:457px">WA</div>
<div class="d" style="left:715.50px;top:457px">USA</div>
<div class="d" style="left:755.06px;top:457px">4</div>
<div class="abs" style="left:792px;top:132px;width:5px;height:336px;background:#ececec"></div>
<div class="abs" style="left:792px;top:132px;width:5px;height:13.8px;background:#bdbdbd;border-radius:2.5px"></div>
<div class="abs" style="left:120px;top:468px;width:677px;height:1px;background:#dcdcdc"></div>
<svg class="ic" style="left:33px;top:281px" width="10" height="13"><path d="M1.2 1.2V10L3.2 8L4.7 11.3L6.3 10.6L4.7 7.6H7.5Z" fill="#000" stroke="#fff" stroke-width="0.85" stroke-linejoin="round"/></svg>
</div></body></html>
